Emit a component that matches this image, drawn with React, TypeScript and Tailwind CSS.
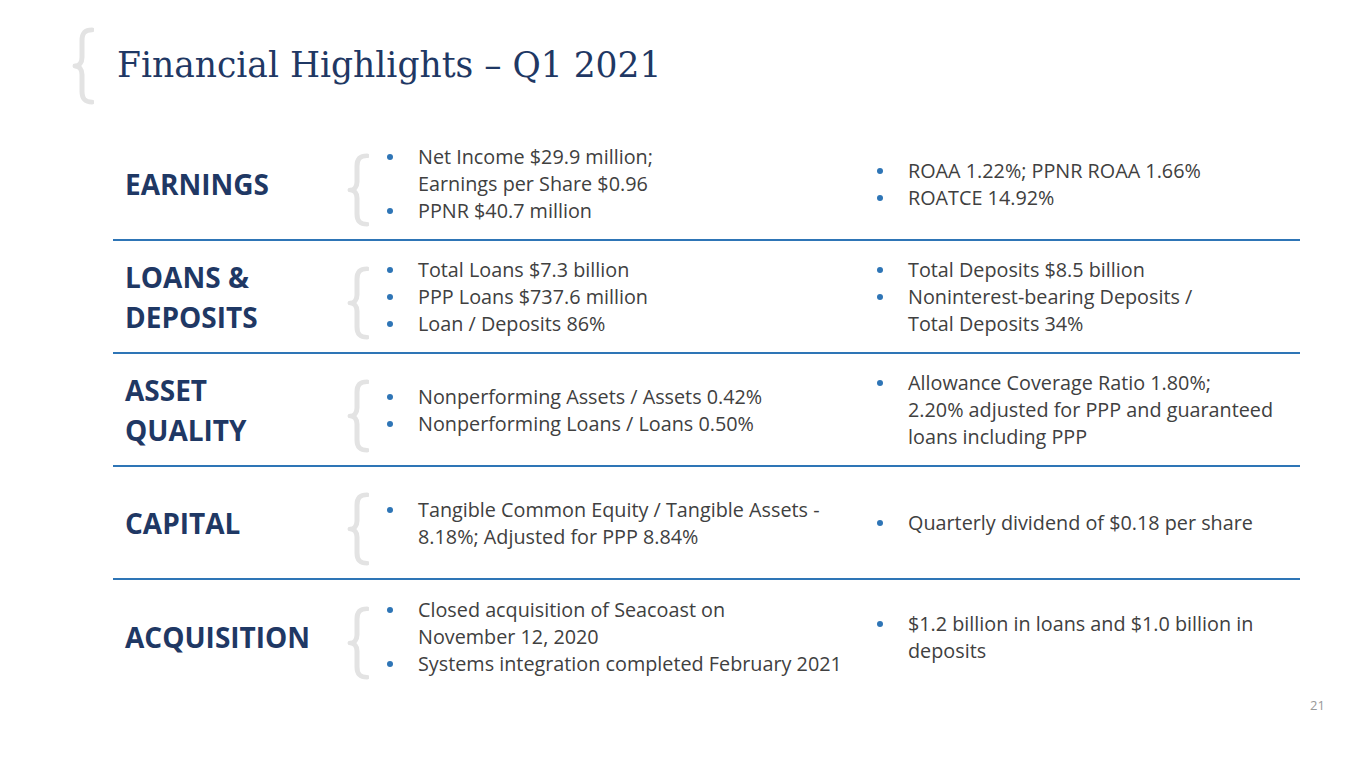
const rows = [
  {
    label: ["EARNINGS"],
    left: [["Net Income $29.9 million;", "Earnings per Share $0.96"], ["PPNR $40.7 million"]],
    right: [["ROAA 1.22%; PPNR ROAA 1.66%"], ["ROATCE 14.92%"]],
  },
  {
    label: ["LOANS &", "DEPOSITS"],
    left: [["Total Loans $7.3 billion"], ["PPP Loans $737.6 million"], ["Loan / Deposits 86%"]],
    right: [["Total Deposits $8.5 billion"], ["Noninterest-bearing Deposits /", "Total Deposits 34%"]],
  },
  {
    label: ["ASSET", "QUALITY"],
    left: [["Nonperforming Assets / Assets 0.42%"], ["Nonperforming Loans / Loans 0.50%"]],
    right: [["Allowance Coverage Ratio 1.80%;", "2.20% adjusted for PPP and guaranteed", "loans including PPP"]],
  },
  {
    label: ["CAPITAL"],
    left: [["Tangible Common Equity / Tangible Assets -", "8.18%; Adjusted for PPP 8.84%"]],
    right: [["Quarterly dividend of $0.18 per share"]],
  },
  {
    label: ["ACQUISITION"],
    left: [["Closed acquisition of Seacoast on", "November 12, 2020"], ["Systems integration completed February 2021"]],
    right: [["$1.2 billion in loans and $1.0 billion in", "deposits"]],
  },
];

const Brace = ({ className }: { className: string }) => (
  <svg viewBox="0 0 22 80" className={className} preserveAspectRatio="none">
    <path
      d="M20 3 C13 3 10 6 10 14 L10 31 C10 37 7 40 3 40 C7 40 10 43 10 49 L10 66 C10 74 13 77 20 77"
      fill="none"
      stroke="#e3e3e3"
      strokeWidth="5"
      strokeLinecap="round"
      strokeLinejoin="round"
    />
  </svg>
);

const BulletList = ({ items }: { items: string[][] }) => (
  <ul className="flex flex-col">
    {items.map((lines, i) => (
      <li key={i} className="flex">
        <span className="w-[33px] shrink-0 pl-[2px] pt-[11px]">
          <span className="block w-[6px] h-[6px] rounded-full bg-[#2e75b6]" />
        </span>
        <div>
          {lines.map((l) => (
            <div key={l}>{l}</div>
          ))}
        </div>
      </li>
    ))}
  </ul>
);

export default function App() {
  return (
    <div className="relative w-[1365px] h-[768px] bg-white overflow-hidden" style={{ fontFamily: "'Open Sans', sans-serif" }}>
      <div className="flex items-center pl-[72px] pt-[28px] h-[104px]">
        <Brace className="w-[22px] h-[78px] mr-[23px]" />
        <h1 className="text-[34.5px] text-[#1f3864] font-['DejaVu_Serif',serif]">
          Financial Highlights – Q1 2021
        </h1>
      </div>

      <div className="ml-[113px] w-[1187px] mt-[24px]">
        {rows.map((r, i) => (
          <div
            key={i}
            className={`grid grid-cols-[234px_38px_490px_1fr] items-center h-[113px] ${i < 4 ? "border-b-2 border-[#2e75b6]" : ""}`}
          >
            <div className="pl-[12px] text-[28px] font-bold leading-[40px] text-[#1f3864]">
              {r.label.map((l) => (
                <div key={l}>{l}</div>
              ))}
            </div>
            <Brace className="w-[22px] h-[74px] mt-[12px]" />
            <div className="text-[19.8px] leading-[27px] text-[#404040]">
              <BulletList items={r.left} />
            </div>
            <div className="text-[19.8px] leading-[27px] text-[#404040]">
              <BulletList items={r.right} />
            </div>
          </div>
        ))}
      </div>

      <div className="absolute left-[1310px] top-[696px] text-[13px] text-[#999999]">21</div>
    </div>
  );
}
